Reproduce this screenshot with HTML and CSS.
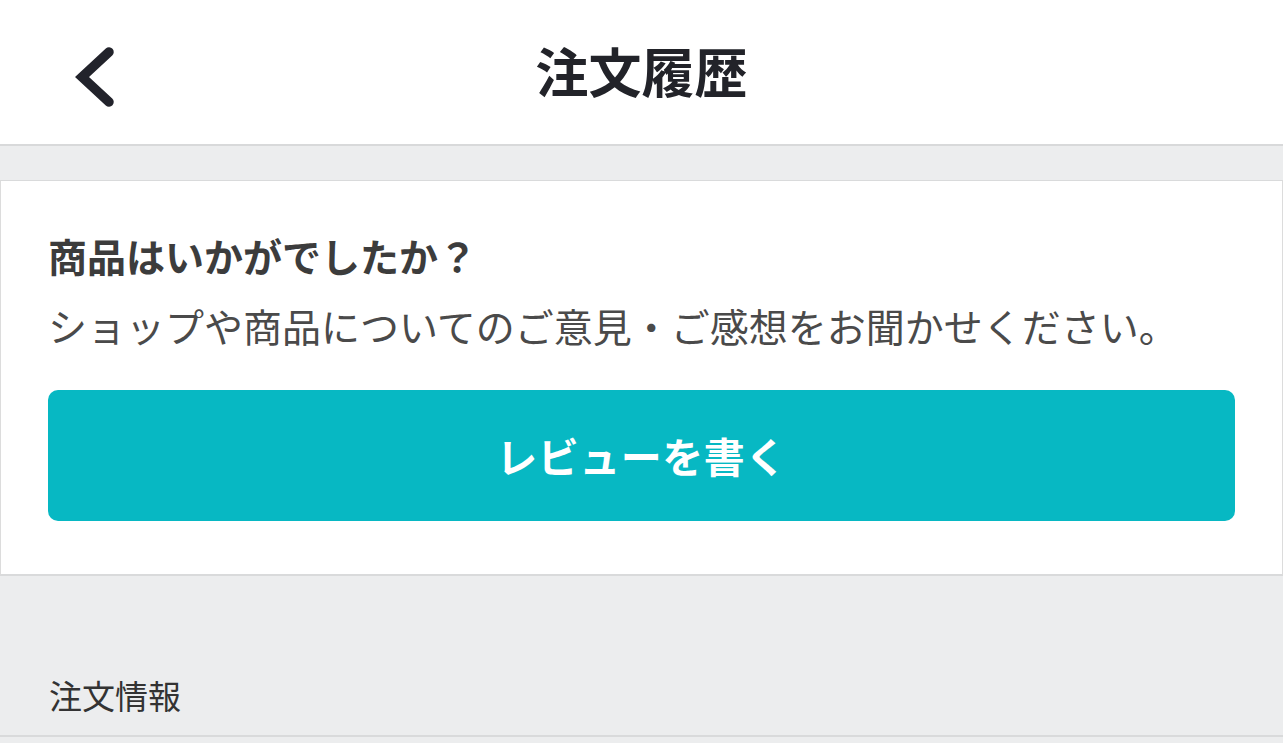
FILE: index.html
```html
<!DOCTYPE html>
<html lang="ja">
<head>
  <meta charset="UTF-8" />
  <meta name="viewport" content="width=device-width, initial-scale=1" />
  <title>注文履歴</title>
  <link rel="stylesheet" href="styles.css">
</head>
<body>

  <!-- Header -->
  <header class="topbar">
    <button class="back-btn" aria-label="戻る">
      <svg width="50" height="70" viewBox="0 0 50 70">
        <polyline points="36,10 9,35 36,60" fill="none" stroke="#22232b" stroke-width="9.5" stroke-linecap="round" stroke-linejoin="miter" />
      </svg>
    </button>
    <h1>注文履歴</h1>
  </header>

  <!-- Review card -->
  <section class="review-card">
    <h2>商品はいかがでしたか？</h2>
    <p>ショップや商品についてのご意見・ご感想をお聞かせください。</p>
    <button class="review-btn">レビューを書く</button>
  </section>

  <!-- Order info heading -->
  <div class="section-head">注文情報</div>

</body>
</html>
```

FILE: styles.css
```css
body {
  margin: 0;
  background-color: #ecedee;
  font-family: "Noto Sans CJK JP", "Noto Sans", sans-serif;
  color: #333;
  min-height: 100vh;
}

.topbar {
  height: 144px;
  background: #fff;
  border-bottom: 2px solid #d8d9da;
  display: flex;
  align-items: center;
  justify-content: center;
  position: relative;
}

.topbar h1 {
  margin: 0;
  font-size: 53px;
  font-weight: 700;
  color: #222329;
  line-height: 1;
  padding-bottom: 4px;
}

.back-btn {
  position: absolute;
  left: 73px;
  top: 42px;
  padding: 0;
  border: none;
  background: none;
  line-height: 0;
}

.review-card {
  margin-top: 34px;
  background: #fff;
  border-top: 1px solid #d9dadb;
  border-bottom: 2px solid #d9dadb;
  border-left: 1px solid #dcdcdc;
  border-right: 1px solid #dcdcdc;
  padding: 51px 47px 53px;
}

.review-card h2 {
  margin: 0;
  font-size: 39px;
  font-weight: 700;
  color: #3c3c3c;
  line-height: 1.2;
}

.review-card p {
  margin: 23px 0 0;
  font-size: 39px;
  color: #4a4a4a;
  line-height: 1.2;
}

.review-btn {
  display: block;
  width: 100%;
  height: 131px;
  margin-top: 41px;
  border: none;
  border-radius: 10px;
  background-color: #07b8c3;
  color: #fff;
  font-family: inherit;
  font-size: 41px;
  font-weight: 700;
  letter-spacing: 0.5px;
  cursor: pointer;
}

.section-head {
  margin-top: 100px;
  padding: 0 49px 20px;
  font-size: 33px;
  color: #333;
  line-height: 1.2;
  border-bottom: 2px solid #d9dadb;
}
```
